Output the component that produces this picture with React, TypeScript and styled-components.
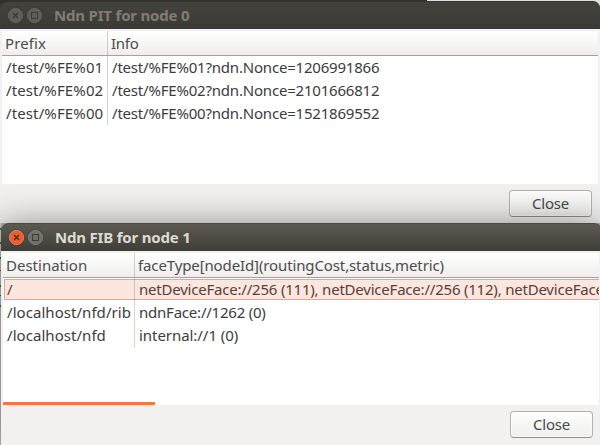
import React from "react";
import styled, { createGlobalStyle } from "styled-components";

const GlobalStyle = createGlobalStyle`
  * { box-sizing: border-box; }
  body {
    margin: 0;
    overflow: hidden;
    background: #b9b8b6;
    font: 15px/23px "Noto Sans", "Open Sans", sans-serif;
    color: #3c3c3c;
  }
`;

const Desktop = styled.div`
  width: 600px;
  height: 445px;
  overflow: hidden;
  display: flex;
  flex-direction: column;
`;

const BackStrip = styled.div`
  flex: none;
  height: 1px;
  background: linear-gradient(90deg, #33322f 427px, #dedfe1 427px);
`;

const BackWindow = styled.section`
  flex: none;
  height: 222px;
  display: flex;
  flex-direction: column;
  background: #f2f1f0;
`;

const FrontArea = styled.div`
  flex: none;
  display: flex;
  height: 222px;
`;

const DesktopEdge = styled.div`
  flex: none;
  width: 1px;
  background:
    linear-gradient(#168a16, #168a16) 0 5px / 1px 2px no-repeat,
    linear-gradient(#168a16, #168a16) 0 19px / 1px 2px no-repeat,
    linear-gradient(#168a16, #168a16) 0 34px / 1px 2px no-repeat,
    linear-gradient(#168a16, #168a16) 0 47px / 1px 1px no-repeat,
    linear-gradient(#168a16, #168a16) 0 62px / 1px 2px no-repeat,
    linear-gradient(#168a16, #168a16) 0 72px / 1px 1px no-repeat,
    linear-gradient(#168a16, #168a16) 0 82px / 1px 2px no-repeat,
    #d4d3d2;
`;

const FrontWindow = styled.section`
  position: relative;
  flex: none;
  width: 601px;
  display: flex;
  flex-direction: column;
  background: #f2f1f0;
  border-radius: 7px 7px 0 0;
  box-shadow: 0 8px 38px 4px rgba(0, 0, 0, 0.5);
`;

const TitleBar = styled.header<{ $active?: boolean }>`
  flex: none;
  height: 28px;
  display: flex;
  align-items: center;
  padding-left: 7px;
  border-radius: 7px 7px 0 0;
  border-top: 1px solid ${p => (p.$active ? "#4b4944" : "#33322f")};
  background: ${p =>
    p.$active ? "linear-gradient(#5c5a50, #3e3d38)" : "linear-gradient(#43423d, #3b3a36)"};
`;

const TitleBackdrop = styled.div`
  flex: none;
  background: linear-gradient(90deg, #33322f 427px, #e4e4e5 427px);
`;

const Title = styled.h1<{ $active?: boolean }>`
  margin: 0 0 0 9px;
  font-size: 15px;
  font-weight: 700;
  line-height: 23px;
  letter-spacing: -0.19px;
  color: ${p => (p.$active ? "#dfdbd2" : "#807d76")};
`;

const ControlIcon = styled.svg`
  flex: none;
  width: 17px;
  height: 17px;
  margin-right: 2px;
`;

type Tone = { fill: string; rim: string; mark: string };
const dimTone: Tone = { fill: "#5f5e59", rim: "#65645f", mark: "#3a3935" };
const closeTone: Tone = { fill: "#ec5f32", rim: "#f58a63", mark: "#47271c" };
const greyTone: Tone = { fill: "#71706a", rim: "#85847d", mark: "#3c3b37" };

const Control = ({ tone, kind }: { tone: Tone; kind: "close" | "maximize" }) => (
  <ControlIcon viewBox="0 0 17 17">
    <circle cx="8.5" cy="8.5" r="8.2" fill="#33322e" opacity="0.55" />
    <circle cx="8.5" cy="8.5" r="7.2" fill={tone.fill} stroke={tone.rim} strokeWidth="0.8" />
    {kind === "close" ? (
      <path d="M6 6l5 5M11 6l-5 5" stroke={tone.mark} strokeWidth="1.3" />
    ) : (
      <rect x="5.5" y="5.5" width="6" height="6" fill="none" stroke={tone.mark} />
    )}
  </ControlIcon>
);

const List = styled.div<{ $height: number }>`
  flex: none;
  width: 596px;
  height: ${p => p.$height}px;
  margin: 2px 0 0 2px;
  display: flex;
  flex-direction: column;
  overflow: hidden;
  background: #fff;
`;

const Row = styled.div<{ $first: number }>`
  flex: none;
  height: 23px;
  display: grid;
  grid-template-columns: ${p => p.$first}px 1fr;
`;

const HeaderRow = styled(Row)`
  height: 25px;
  line-height: 25px;
  border-bottom: 1px solid #a3a2a0;
  background: linear-gradient(#fff, #efeeed);
  color: #4c4c4c;
`;

const SelectedRow = styled(Row)`
  color: #574039;
  background:
    linear-gradient(#f0a184, #f0a184) 1px 1px / 100% 1px no-repeat,
    linear-gradient(#f0a184, #f0a184) 1px 21px / 100% 1px no-repeat,
    linear-gradient(#f0a184, #f0a184) 1px 1px / 1px 20px no-repeat,
    linear-gradient(#fde6dd, #fde6dd) 1px 1px / 100% 20px no-repeat;
`;

const Cell = styled.div<{ $spacing?: number; $pad?: number }>`
  min-width: 0;
  overflow: hidden;
  white-space: pre;
  padding-left: ${p => p.$pad ?? 4}px;
  letter-spacing: ${p => p.$spacing ?? 0}px;

  &:first-child {
    border-right: 1px solid rgba(0, 0, 0, 0.17);
  }
`;

const Progress = styled.div`
  width: 152px;
  height: 3px;
  margin-top: auto;
  background: #f37846;
`;

const Actions = styled.footer`
  display: flex;
  justify-content: flex-end;
  padding: 6px 8px 0 0;
`;

const CloseButton = styled.button`
  width: 83px;
  height: 27px;
  padding: 0 0 1px;
  border: 1px solid #b4b2b0;
  border-bottom-color: #92908e;
  border-radius: 4px;
  background: linear-gradient(#fefefe, #f0efee);
  box-shadow: inset 0 0 0 1px rgba(255, 255, 255, 0.6);
  font: inherit;
  line-height: 23px;
  letter-spacing: -0.2px;
  color: #484848;
`;

const FrontActions = styled(Actions)`
  height: 40px;
  padding-right: 9px;
`;

export default function App() {
  return (
    <>
      <GlobalStyle />
      <Desktop>
        <BackStrip />
        <BackWindow>
          <TitleBackdrop>
            <TitleBar>
              <Control kind="close" tone={dimTone} />
              <Control kind="maximize" tone={dimTone} />
              <Title>Ndn PIT for node 0</Title>
            </TitleBar>
          </TitleBackdrop>
          <List $height={153}>
            <HeaderRow $first={106}>
              <Cell $pad={3} $spacing={0.1}>Prefix</Cell>
              <Cell $pad={3} $spacing={-0.25}>Info</Cell>
            </HeaderRow>
            {[
              ["/test/%FE%01", "/test/%FE%01?ndn.Nonce=1206991866"],
              ["/test/%FE%02", "/test/%FE%02?ndn.Nonce=2101666812"],
              ["/test/%FE%00", "/test/%FE%00?ndn.Nonce=1521869552"],
            ].map(([prefix, info]) => (
              <Row key={prefix} $first={106}>
                <Cell $spacing={0.12}>{prefix}</Cell>
                <Cell $spacing={-0.2}>{info}</Cell>
              </Row>
            ))}
          </List>
          <Actions>
            <CloseButton>Close</CloseButton>
          </Actions>
        </BackWindow>
        <FrontArea>
          <DesktopEdge />
          <FrontWindow>
            <TitleBar $active>
              <Control kind="close" tone={closeTone} />
              <Control kind="maximize" tone={greyTone} />
              <Title $active>Ndn FIB for node 1</Title>
            </TitleBar>
            <List $height={152}>
              <HeaderRow $first={132}>
                <Cell $pad={3}>Destination</Cell>
                <Cell $pad={3} $spacing={-0.12}>faceType[nodeId](routingCost,status,metric)</Cell>
              </HeaderRow>
              <SelectedRow $first={132}>
                <Cell>/</Cell>
                <Cell $spacing={-0.21}>
                  {"netDeviceFace://256 (111), netDeviceFace://256 (112), netDeviceFace"}
                </Cell>
              </SelectedRow>
              <Row $first={132}>
                <Cell $spacing={0.05}>/localhost/nfd/rib</Cell>
                <Cell $spacing={-0.22}>ndnFace://1262 (0)</Cell>
              </Row>
              <Row $first={132}>
                <Cell $spacing={0.05}>/localhost/nfd</Cell>
                <Cell $spacing={-0.05}>internal://1 (0)</Cell>
              </Row>
              <Progress />
            </List>
            <FrontActions>
              <CloseButton>Close</CloseButton>
            </FrontActions>
          </FrontWindow>
        </FrontArea>
      </Desktop>
    </>
  );
}
